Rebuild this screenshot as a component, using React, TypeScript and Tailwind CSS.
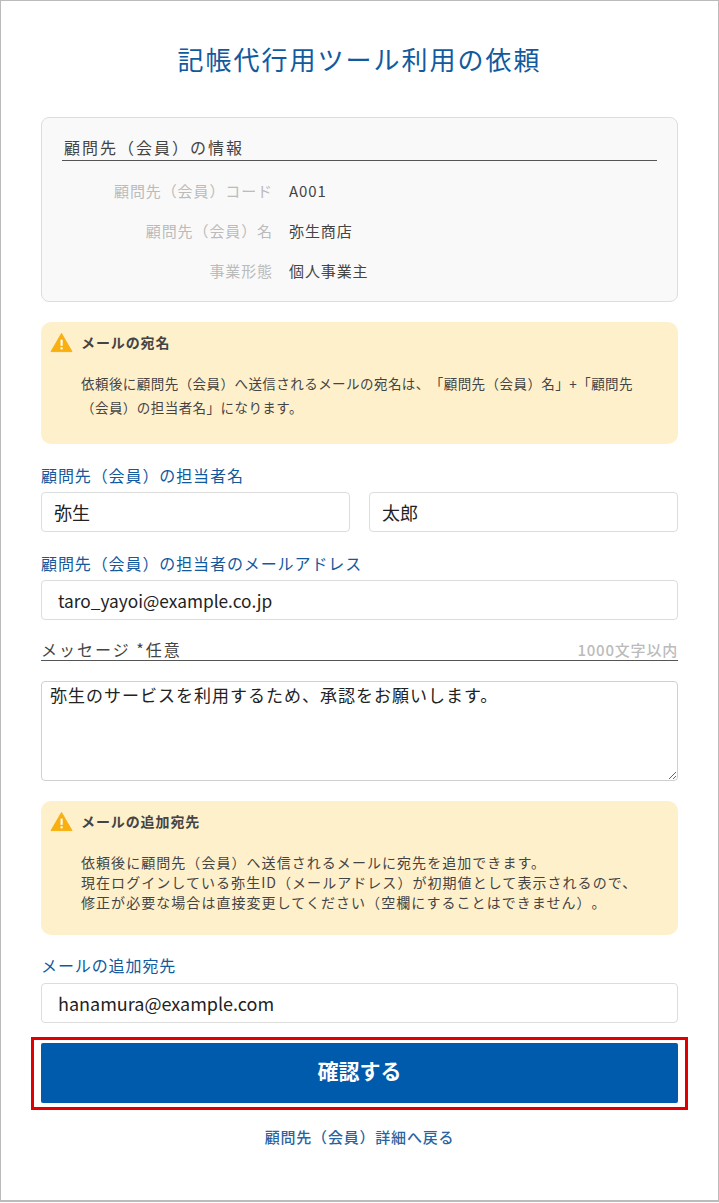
import React from 'react';

function WarnIcon() {
  return (
    <svg width="23" height="21" viewBox="0 0 24 22" className="shrink-0">
      <path d="M12 1.5 L23 20.5 H1 Z" fill="#f8b010" stroke="#f8b010" strokeWidth="1" strokeLinejoin="round" />
      <rect x="11" y="8" width="2.2" height="6.5" fill="#fff" />
      <rect x="11" y="16" width="2.2" height="2.2" fill="#fff" />
    </svg>
  );
}

function Notice({ title, className, bodyClass, children }: { title: string; className: string; bodyClass: string; children: React.ReactNode }) {
  return (
    <div className={`bg-[#fff0cc] rounded-[10px] pl-[9px] pr-4 pt-[9px] ${className}`}>
      <div className="flex items-center gap-[8px] h-[22px]">
        <WarnIcon />
        <span className="text-[14px] font-bold tracking-[0.9px] text-[#444]">{title}</span>
      </div>
      <div className={`pl-[31px] text-[#444] ${bodyClass}`}>{children}</div>
    </div>
  );
}

function Row({ label, value }: { label: string; value: string }) {
  return (
    <div className="flex h-10 items-center">
      <div className="w-[211px] text-right text-[15px] tracking-[0.9px] text-[#bbb]">{label}</div>
      <div className="ml-[16px] text-[15px] tracking-[0.9px] text-[#444]">{value}</div>
    </div>
  );
}

function Field({ value, className }: { value: string; className: string }) {
  return (
    <input
      readOnly
      value={value}
      className={`h-10 w-full bg-white border border-[#ddd] rounded-[4px] text-[#222] outline-none ${className}`}
    />
  );
}

export default function App() {
  return (
    <div
      className="w-[719px] h-[1202px] bg-white border border-[#bbb] border-b-2 px-10 overflow-hidden [text-spacing-trim:space-all]"
      style={{ fontFamily: '"Noto Sans CJK JP", "Noto Sans", sans-serif' }}
    >
      <h1 className="mt-[38px] h-10 leading-10 text-center text-[26px] tracking-[2px] text-[#125a9e]">
        記帳代行用ツール利用の依頼
      </h1>

      <div className="mt-[38px] h-[185px] bg-[#f9f9f9] border border-[#ddd] rounded-[8px] px-5 pt-5">
        <div className="h-[23px] border-b border-[#555] pl-[2px] text-[16px] leading-[19px] tracking-[2px] text-[#444]">
          顧問先（会員）の情報
        </div>
        <div className="mt-[10px]">
          <Row label="顧問先（会員）コード" value="A001" />
          <Row label="顧問先（会員）名" value="弥生商店" />
          <Row label="事業形態" value="個人事業主" />
        </div>
      </div>

      <Notice title="メールの宛名" className="mt-5 h-[122px]" bodyClass="mt-[18px] text-[13.5px] tracking-[0.45px] leading-[24px]">
        依頼後に顧問先（会員）へ送信されるメールの宛名は、「顧問先（会員）名」+「顧問先
        <br />
        （会員）の担当者名」になります。
      </Notice>

      <label className="block mt-[19px] h-[24px] leading-[24px] text-[16px] tracking-[0.9px] text-[#125a9e]">
        顧問先（会員）の担当者名
      </label>
      <div className="mt-[5px] flex gap-[19px]">
        <Field value="弥生" className="pl-3 text-[18px]" />
        <Field value="太郎" className="pl-3 text-[18px]" />
      </div>

      <label className="block mt-[19px] h-[24px] leading-[24px] text-[16px] tracking-[0.9px] text-[#125a9e]">
        顧問先（会員）の担当者のメールアドレス
      </label>
      <Field value="taro_yayoi@example.co.jp" className="mt-[5px] pl-4 text-[17.3px]" />

      <div className="mt-[18px] h-[23px] flex justify-between border-b border-[#555] leading-[23px]">
        <span className="text-[16px] tracking-[2px] text-[#444]">メッセージ *任意</span>
        <span className="text-[15px] tracking-[0.8px] font-medium text-[#bbb]">1000文字以内</span>
      </div>
      <textarea
        readOnly
        value="弥生のサービスを利用するため、承認をお願いします。"
        className="block mt-5 w-full h-[100px] bg-white border border-[#d0d0d0] rounded-[4px] px-2 py-0 text-[17px] leading-[26px] tracking-[1px] text-[#222] outline-none"
      />

      <Notice title="メールの追加宛先" className="mt-5 h-[134px]" bodyClass="mt-[20px] text-[14px] tracking-[1.05px] leading-[20px]">
        依頼後に顧問先（会員）へ送信されるメールに宛先を追加できます。
        <br />
        現在ログインしている弥生ID（メールアドレス）が初期値として表示されるので、
        <br />
        修正が必要な場合は直接変更してください（空欄にすることはできません）。
      </Notice>

      <label className="block mt-[18px] h-[24px] leading-[24px] text-[16px] tracking-[0.9px] text-[#125a9e]">
        メールの追加宛先
      </label>
      <Field value="hanamura@example.com" className="mt-[6px] pl-4 text-[18px]" />

      <div className="relative mt-5">
        <button className="block w-full h-[60px] pb-[4px] bg-[#005bac] rounded-[2px] text-white text-[21px] font-bold">
          確認する
        </button>
        <div className="absolute -left-[10px] -right-[10px] -top-[6px] -bottom-[7px] border-[3px] border-[#e00000]" />
      </div>

      <div className="mt-[23px] text-center text-[15px] leading-[22px] font-medium tracking-[0.8px] text-[#2a649f]">
        顧問先（会員）詳細へ戻る
      </div>
    </div>
  );
}
